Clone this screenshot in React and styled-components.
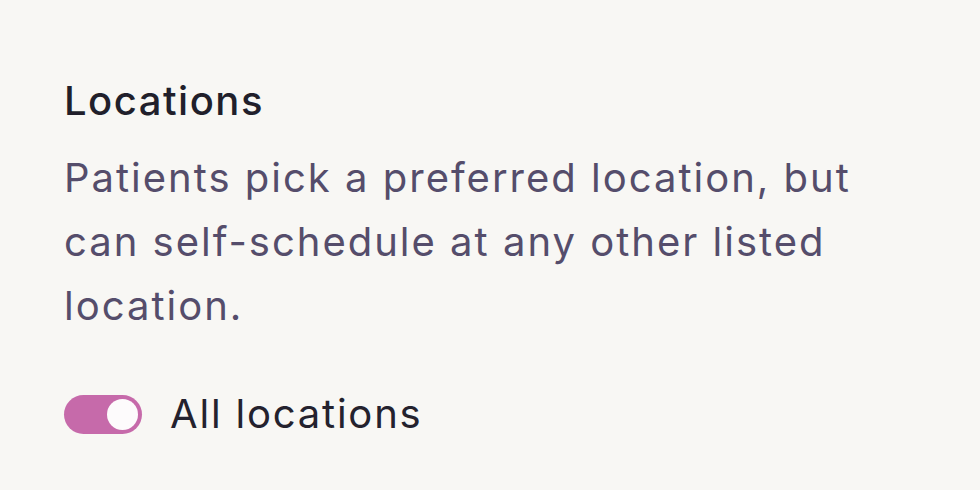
import React, { useState } from "react";
import styled, { createGlobalStyle } from "styled-components";

const GlobalStyle = createGlobalStyle`
  html, body {
    margin: 0;
    padding: 0;
    background: #f8f7f4;
  }
  body {
    font-family: Inter, "Open Sans", sans-serif;
  }
`;

const Page = styled.div`
  width: 980px;
  height: 490px;
  box-sizing: border-box;
  padding: 75px 64px 0;
  background: #f8f7f4;
`;

const Title = styled.h2`
  margin: 0;
  font-size: 40px;
  line-height: 52px;
  font-weight: 500;
  letter-spacing: 1.5px;
  color: #211f2b;
`;

const Description = styled.p`
  margin: 19px 0 0;
  max-width: 830px;
  font-size: 40px;
  line-height: 64px;
  font-weight: 400;
  letter-spacing: 2px;
  color: #554d6b;
`;

const ToggleRow = styled.label`
  display: flex;
  align-items: center;
  gap: 28px;
  margin-top: 52px;
  cursor: pointer;
`;

const Track = styled.span`
  position: relative;
  flex: none;
  display: inline-block;
  width: 78px;
  height: 39px;
  border-radius: 20px;
  background: ${({ $on }) => ($on ? "#c66aaa" : "#cfcbd6")};
  transition: background 0.2s;
`;

const Knob = styled.span`
  position: absolute;
  top: 4px;
  left: ${({ $on }) => ($on ? "43px" : "4px")};
  width: 31px;
  height: 31px;
  border-radius: 50%;
  background: #fdfbfc;
  transition: left 0.2s;
`;

const ToggleLabel = styled.span`
  font-size: 40px;
  line-height: 48px;
  letter-spacing: 1.8px;
  color: #24222e;
`;

export default function App() {
  const [on, setOn] = useState(true);
  return (
    <>
      <GlobalStyle />
      <Page>
        <Title>Locations</Title>
        <Description>
          Patients pick a preferred location, but can self-schedule at any
          other listed location.
        </Description>
        <ToggleRow onClick={() => setOn(!on)}>
          <Track $on={on}>
            <Knob $on={on} />
          </Track>
          <ToggleLabel>All locations</ToggleLabel>
        </ToggleRow>
      </Page>
    </>
  );
}
